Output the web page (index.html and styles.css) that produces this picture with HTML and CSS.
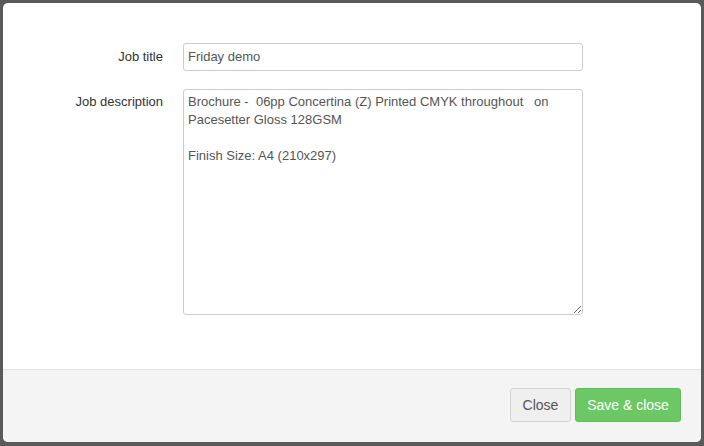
FILE: index.html
```html
<!DOCTYPE html>
<html>
<head>
<meta charset="utf-8">
<link rel="stylesheet" href="styles.css">
</head>
<body>
<div class="modal">
  <div class="modal-body">
    <div class="row">
      <label class="label" for="t">Job title</label>
      <input id="t" class="input" type="text" value="Friday demo">
    </div>
    <div class="row">
      <label class="label label-top" for="d">Job description</label>
      <textarea id="d" class="textarea">Brochure -  06pp Concertina (Z) Printed CMYK throughout   on Pacesetter Gloss 128GSM

Finish Size: A4 (210x297)</textarea>
    </div>
  </div>
  <div class="modal-footer">
    <button class="btn btn-default">Close</button>
    <button class="btn btn-success">Save &amp; close</button>
  </div>
</div>
</body>
</html>
```
FILE: styles.css
```css
html, body {
  margin: 0;
  padding: 0;
}
body {
  width: 704px;
  height: 446px;
  background: #5a5a5a;
  padding: 3px;
  box-sizing: border-box;
  font-family: "Liberation Sans", Arial, sans-serif;
  font-size: 13px;
  color: #333;
}
.modal {
  width: 698px;
  height: 439px;
  background: #fff;
  border-radius: 5px;
  overflow: hidden;
  display: flex;
  flex-direction: column;
}
.modal-body {
  flex: 1;
  padding: 40px 0 0 0;
  display: flex;
  flex-direction: column;
  gap: 18px;
}
.row {
  display: flex;
  align-items: center;
}
.row:last-child {
  align-items: flex-start;
}
.label {
  width: 160px;
  text-align: right;
  padding-right: 20px;
  padding-bottom: 2px;
  box-sizing: content-box;
  color: #333;
}
.label-top {
  padding-top: 5px;
  padding-bottom: 0;
}
.input, .textarea {
  font-family: "Liberation Sans", Arial, sans-serif;
  font-size: 13px;
  color: #555;
  border: 1px solid #ccc;
  border-radius: 3px;
  width: 400px;
  box-sizing: border-box;
  margin: 0;
  outline: none;
  background: #fff;
}
.input {
  height: 28px;
  padding: 2px 4px 4px;
}
.textarea {
  height: 226px;
  padding: 3px 4px;
  line-height: 18px;
  resize: vertical;
  display: block;
}
.modal-footer {
  height: 73px;
  background: #f4f4f4;
  border-top: 1px solid #e3e3e3;
  box-sizing: border-box;
  display: flex;
  justify-content: flex-end;
  align-items: flex-start;
  padding: 18px 20px 0 0;
  gap: 4px;
}
.btn {
  font-family: "Liberation Sans", Arial, sans-serif;
  font-size: 14px;
  height: 34px;
  border-radius: 3px;
  padding: 0;
  margin: 0;
  white-space: nowrap;
  text-align: center;
}
.btn-default {
  background: #efefef;
  border: 1px solid #d4d4d4;
  color: #555;
  width: 61px;
}
.btn-success {
  background: #6cc765;
  border: 1px solid #63bc5c;
  color: #fff;
  width: 106px;
}
```
